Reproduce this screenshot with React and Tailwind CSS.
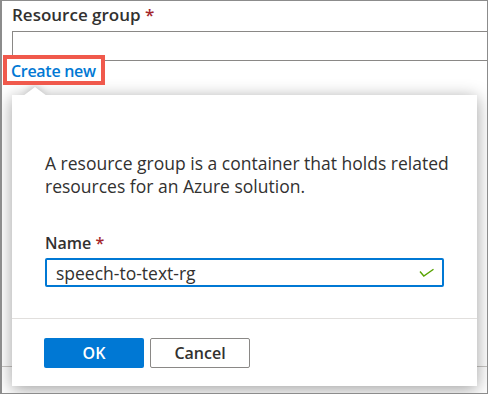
import React from 'react';

const font = { fontFamily: '"Open Sans", "Noto Sans", sans-serif' };

export default function App() {
  return (
    <div
      className="relative w-[488px] h-[394px] overflow-hidden bg-white border border-l-2 border-[#8c8c8c] text-[#323130]"
      style={font}
    >
      {/* page behind the callout */}
      <div className="pt-[2px]">
        <div className="ml-[10px] text-[17px] leading-[24px] font-semibold">
          Resource group <span className="text-[#a4262c]">*</span>
        </div>
        <div className="ml-[10px] mt-[4px] h-[30px] border border-[#8a8886] border-r-0 bg-white" />
        <div className="relative z-10 -mt-[6px] ml-[1px] w-fit bg-white border-[4px] border-[#f0594c] pl-[4px] pr-[5px] pt-[2px]">
          <div className="text-[16px] leading-[20px] font-semibold tracking-[-0.3px] text-[#0078d4]">Create new</div>
        </div>
        <div className="h-[282px] border-b border-[#c8c6c4]" />
      </div>

      {/* callout */}
      <div className="absolute left-[10px] top-[94px] w-[465px] h-[291px] bg-white shadow-[0_3px_16px_rgba(0,0,0,0.38)] flex flex-col">
        <svg
          className="absolute left-[11px] -top-[8px] drop-shadow-[0_-2px_3px_rgba(0,0,0,0.2)]"
          width="24"
          height="9"
          viewBox="0 0 24 9"
        >
          <polygon points="0,9 12,0 24,9" fill="#ffffff" />
        </svg>
        <div className="relative bg-white flex-1 flex flex-col">
          <div className="pl-[33px] pt-[57px] pb-[31px] border-b border-[#e1dfdd]">
            <p className="w-[425px] text-[17.5px] leading-[23px]">
              A resource group is a container that holds related resources for an Azure solution.
            </p>
            <div className="mt-[34px] text-[16px] leading-[22px] font-semibold">
              Name <span className="text-[#a4262c]">*</span>
            </div>
            <div className="mt-[4px] w-[399px] h-[29px] border-2 border-[#0078d4] rounded-[2px] flex items-center justify-between pl-[9px] pr-[7px]">
              <span className="text-[17.5px] leading-[22px]">speech-to-text-rg</span>
              <svg width="16" height="10" viewBox="0 0 16 10">
                <path d="M1 3.5 L4.8 8 L14.5 1.2" fill="none" stroke="#57a300" strokeWidth="1.4" />
              </svg>
            </div>
          </div>
          <div className="pl-[32px] pt-[19px] flex gap-[6px]">
            <button className="w-[100px] h-[30px] rounded-[2px] bg-[#0078d4] text-white text-[16px] font-semibold">
              OK
            </button>
            <button className="w-[100px] h-[30px] rounded-[2px] border border-[#8a8886] bg-white text-[#323130] text-[16px] font-semibold">
              Cancel
            </button>
          </div>
        </div>
      </div>
    </div>
  );
}
